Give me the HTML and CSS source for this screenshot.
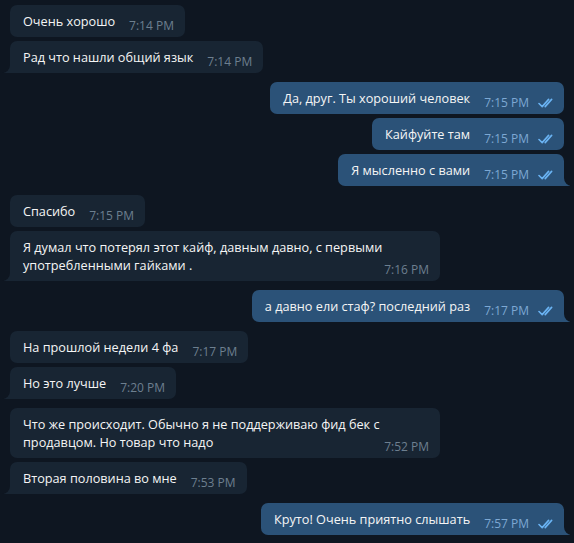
FILE: index.html
```html
<!DOCTYPE html>
<html lang="ru">
<head>
    <meta charset="UTF-8">
    <meta name="viewport" content="width=device-width, initial-scale=1.0">
    <title>Chat</title>
    <link rel="stylesheet" href="styles.css">
</head>
<body>
    <main class="chat">
        <!-- Incoming -->
        <div class="group in">
            <div class="bubble"><span class="text">Очень хорошо</span><span class="meta"><span class="time">7:14 PM</span></span></div>
            <div class="bubble tail"><span class="text">Рад что нашли общий язык</span><span class="meta"><span class="time">7:14 PM</span></span></div>
        </div>

        <!-- Outgoing -->
        <div class="group out">
            <div class="bubble"><span class="text">Да, друг. Ты хороший человек</span><span class="meta"><span class="time">7:15 PM</span><svg class="check" width="17" height="10" viewBox="0 0 17 10"><path d="M1 5.5 L4.2 8.6 L10.6 1.4 M7.2 8.6 L13.6 1.4"/></svg></span></div>
            <div class="bubble"><span class="text">Кайфуйте там</span><span class="meta"><span class="time">7:15 PM</span><svg class="check" width="17" height="10" viewBox="0 0 17 10"><path d="M1 5.5 L4.2 8.6 L10.6 1.4 M7.2 8.6 L13.6 1.4"/></svg></span></div>
            <div class="bubble tail"><span class="text">Я мысленно с вами</span><span class="meta"><span class="time">7:15 PM</span><svg class="check" width="17" height="10" viewBox="0 0 17 10"><path d="M1 5.5 L4.2 8.6 L10.6 1.4 M7.2 8.6 L13.6 1.4"/></svg></span></div>
        </div>

        <div class="group in">
            <div class="bubble"><span class="text">Спасибо</span><span class="meta"><span class="time">7:15 PM</span></span></div>
            <div class="bubble tail"><span class="text">Я думал что потерял этот кайф, давным давно, с первыми употребленными гайками .</span><span class="meta"><span class="time">7:16 PM</span></span></div>
        </div>

        <div class="group out">
            <div class="bubble tail"><span class="text">а давно ели стаф? последний раз</span><span class="meta"><span class="time">7:17 PM</span><svg class="check" width="17" height="10" viewBox="0 0 17 10"><path d="M1 5.5 L4.2 8.6 L10.6 1.4 M7.2 8.6 L13.6 1.4"/></svg></span></div>
        </div>

        <div class="group in">
            <div class="bubble"><span class="text">На прошлой недели 4 фа</span><span class="meta"><span class="time">7:17 PM</span></span></div>
            <div class="bubble tail"><span class="text">Но это лучше</span><span class="meta"><span class="time">7:20 PM</span></span></div>
        </div>

        <div class="group in">
            <div class="bubble"><span class="text">Что же происходит. Обычно я не поддерживаю фид бек с продавцом. Но товар что надо</span><span class="meta"><span class="time">7:52 PM</span></span></div>
            <div class="bubble tail"><span class="text">Вторая половина во мне</span><span class="meta"><span class="time">7:53 PM</span></span></div>
        </div>

        <div class="group out">
            <div class="bubble tail"><span class="text">Круто! Очень приятно слышать</span><span class="meta"><span class="time">7:57 PM</span><svg class="check" width="17" height="10" viewBox="0 0 17 10"><path d="M1 5.5 L4.2 8.6 L10.6 1.4 M7.2 8.6 L13.6 1.4"/></svg></span></div>
        </div>
    </main>
</body>
</html>
```

FILE: styles.css
```css
/* General */
html, body {
    margin: 0;
    padding: 0;
    height: 100%;
    overflow: hidden;
}

body {
    background: #0e1621;
    color: #f5f5f5;
    font-family: 'Open Sans', 'Noto Sans', sans-serif;
    font-size: 12.7px;
    line-height: 18px;
}

.chat {
    display: flex;
    flex-direction: column;
    gap: 9px;
    padding: 5px 10px;
}

.group {
    display: flex;
    flex-direction: column;
    gap: 4px;
}

.group.in {
    align-items: flex-start;
}

.group.out {
    align-items: flex-end;
}

/* Bubbles */
.bubble {
    position: relative;
    display: inline-block;
    max-width: 430px;
    box-sizing: border-box;
    padding: 7px 11px 7px 13px;
    border-radius: 7px;
}

.in .bubble {
    background: #182533;
}

.out .bubble {
    background: #2b5278;
    padding-right: 9px;
}

.in .bubble.tail {
    border-bottom-left-radius: 0;
}

.out .bubble.tail {
    border-bottom-right-radius: 0;
}

/* Tail drawn from two small blocks */
.bubble.tail::before,
.bubble.tail::after {
    content: "";
    position: absolute;
    bottom: 0;
    width: 10px;
    height: 10px;
}

.in .bubble.tail::before {
    left: -6px;
    background: #182533;
}

.in .bubble.tail::after {
    left: -10px;
    background: #0e1621;
    border-bottom-right-radius: 8px;
}

.out .bubble.tail::before {
    right: -6px;
    background: #2b5278;
}

.out .bubble.tail::after {
    right: -10px;
    background: #0e1621;
    border-bottom-left-radius: 8px;
}

/* Time and checks */
.meta {
    float: right;
    position: relative;
    top: 5px;
    margin-left: 14px;
    display: flex;
    align-items: center;
    font-size: 12px;
    line-height: 18px;
}

.in .time {
    color: #6d7f8f;
}

.out .time {
    color: #7da8d3;
}

.check {
    margin-left: 9px;
    fill: none;
    stroke: #6ab3f3;
    stroke-width: 1.6;
    stroke-linecap: round;
    stroke-linejoin: round;
}
```
